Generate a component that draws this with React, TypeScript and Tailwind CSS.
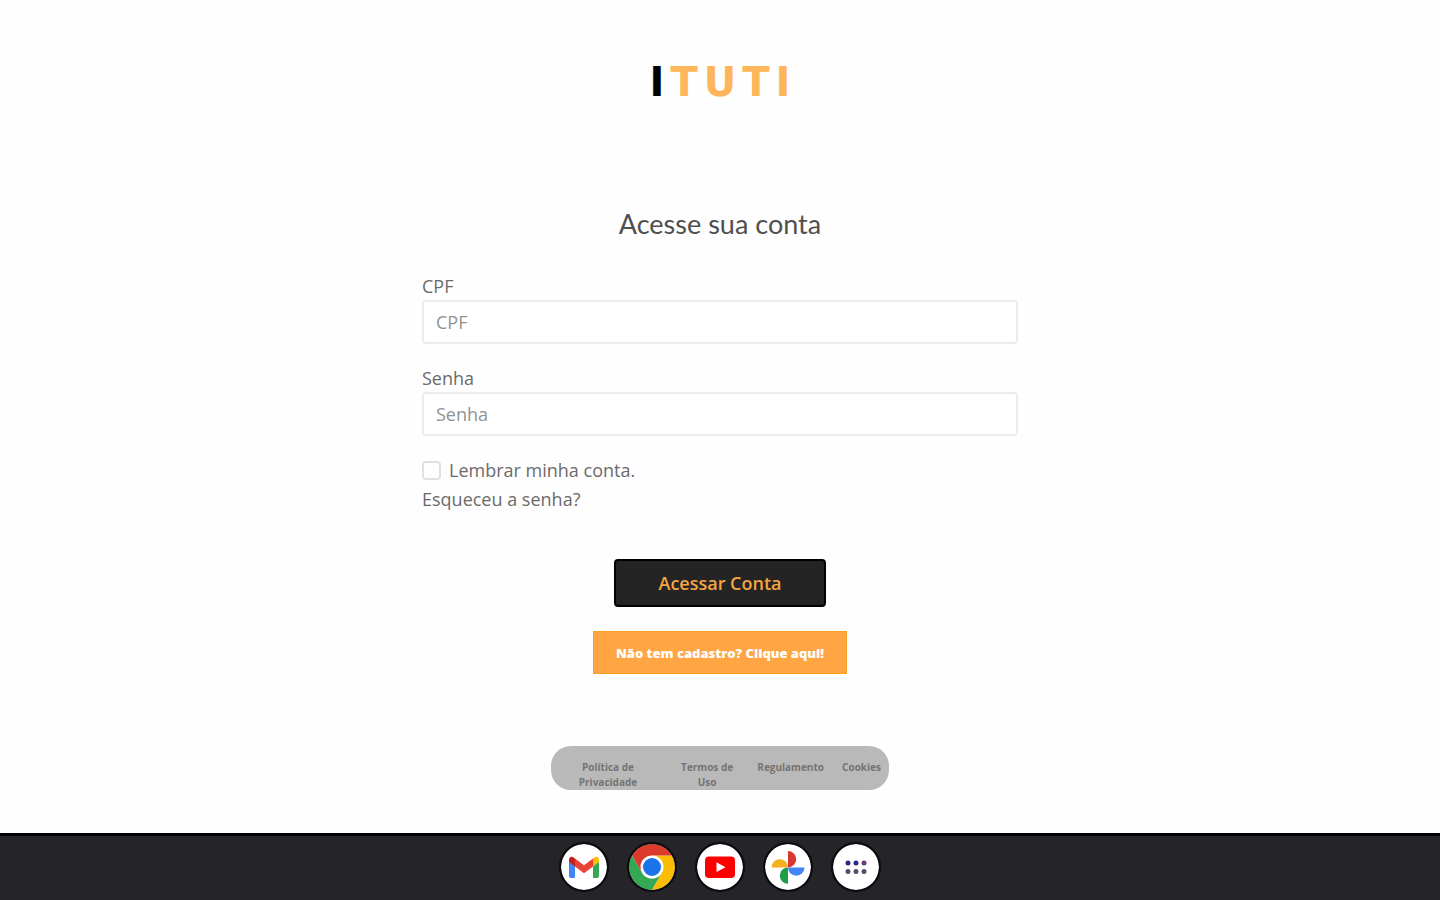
import { useState } from "react";

const footerLinks = [
  { label: "Política de Privacidade", className: "w-[98px]" },
  { label: "Termos de Uso", className: "w-16" },
  { label: "Regulamento", className: "" },
  { label: "Cookies", className: "" },
];

function GmailIcon() {
  return (
    <svg viewBox="0 0 46 46" className="size-full" aria-hidden="true">
      <path fill="#4285f4" d="M8 17l6 4.500V34h-4a2 2 0 0 1-2-2z" />
      <path fill="#34a853" d="M32 21.500l6-4.500v15a2 2 0 0 1-2 2h-4z" />
      <path fill="#fbbc04" d="M32 14.500l1.400-1.100c1.900-1.400 4.600 0 4.600 2.400V18l-6 4.500z" />
      <path fill="#ea4335" d="M14 22.500v-8l9 6.700 9-6.700v8l-9 6.700z" />
      <path fill="#c5221f" d="M8 15.800V18l6 4.500v-8l-1.400-1.100C10.700 12 8 13.400 8 15.800z" />
    </svg>
  );
}

function ChromeIcon() {
  return (
    <svg viewBox="0 0 46 46" className="size-full" aria-hidden="true">
      <path fill="#34a853" d="M3.080 11.500A23 23 0 0 0 23 46L33 28.700 23 23l-10 5.700z" />
      <path fill="#fbbc04" d="M42.920 11.500A23 23 0 0 1 23 46l10-17.300L23 11.500z" />
      <path fill="#db3a2c" d="M3.080 11.500a23 23 0 0 1 39.840 0H23L13 28.700z" />
      <circle cx="23" cy="23" r="11.500" fill="#fff" />
      <circle cx="23" cy="23" r="9" fill="#1a73e8" />
    </svg>
  );
}

function YoutubeIcon() {
  return (
    <svg viewBox="0 0 46 46" className="size-full" aria-hidden="true">
      <rect x="8" y="12.500" width="30" height="21.500" rx="4" fill="#f00" />
      <path fill="#fff" d="M19.500 18.300v9.800l9-4.900z" />
    </svg>
  );
}

function PhotosIcon() {
  return (
    <svg viewBox="0 0 46 46" className="size-full" aria-hidden="true">
      <path fill="#d93831" d="M23 7a8.200 8.200 0 0 1 0 16.400z" />
      <path fill="#4285f4" d="M39.500 23.400a8.200 8.200 0 0 1-16.500 0z" />
      <path fill="#1f9d49" d="M23 39.800a8.200 8.200 0 0 1 0-16.400z" />
      <path fill="#f4b020" d="M6.500 23.400a8.200 8.200 0 0 1 16.500 0z" />
    </svg>
  );
}

function AppsIcon() {
  return (
    <svg viewBox="0 0 46 46" className="size-full" aria-hidden="true">
      <g fill="#28288a">
        <circle cx="15" cy="19" r="2.500" />
        <circle cx="23" cy="19" r="2.500" />
      </g>
      <circle cx="31" cy="19" r="2.500" fill="#65406f" />
      <g fill="#50506e">
        <circle cx="15" cy="27.500" r="2.500" />
        <circle cx="23" cy="27.500" r="2.500" />
        <circle cx="31" cy="27.500" r="2.500" />
      </g>
    </svg>
  );
}

const shelfApps = [
  { name: "Gmail", icon: <GmailIcon /> },
  { name: "Chrome", icon: <ChromeIcon /> },
  { name: "YouTube", icon: <YoutubeIcon /> },
  { name: "Fotos", icon: <PhotosIcon /> },
  { name: "Aplicativos", icon: <AppsIcon /> },
];

export default function App() {
  const [remember, setRemember] = useState(false);

  return (
    <div className="flex min-h-screen flex-col bg-[#fefefe] font-['Open_Sans',sans-serif] text-[#6b6b6b]">
      <main className="flex grow flex-col items-center px-4 pt-14">
        <div className="flex gap-1.5 font-['DejaVu_Sans',sans-serif] text-[40px] leading-[52px] font-bold text-[#ffb55a]">
          <span className="text-black">I</span>
          <span>T</span>
          <span>U</span>
          <span>T</span>
          <span>I</span>
        </div>

        <h1 className="mt-[100px] font-[Lato,sans-serif] text-[27px] leading-8 text-[#505050]">
          Acesse sua conta
        </h1>

        <form
          className="mt-8 flex w-full max-w-[596px] flex-col text-[18px] leading-7"
          onSubmit={(e) => e.preventDefault()}
        >
          <label htmlFor="cpf">CPF</label>
          <input
            id="cpf"
            type="text"
            placeholder="CPF"
            className="h-11 w-full rounded border-2 border-[#ebecec] bg-white px-3 placeholder:text-[#8e9494]"
          />

          <label htmlFor="senha" className="mt-5">
            Senha
          </label>
          <input
            id="senha"
            type="password"
            placeholder="Senha"
            className="h-11 w-full rounded border-2 border-[#ebecec] bg-white px-3 placeholder:text-[#8e9494]"
          />

          <div className="mt-5 flex items-center gap-2">
            <input
              id="lembrar"
              type="checkbox"
              checked={remember}
              onChange={(e) => setRemember(e.target.checked)}
              className="size-[19px] appearance-none rounded border-2 border-[#e0e0e0] bg-white checked:bg-[#ffa73f]"
            />
            <label htmlFor="lembrar">Lembrar minha conta.</label>
          </div>
          <a href="#" className="mt-px self-start">
            Esqueceu a senha?
          </a>

          <button
            type="submit"
            className="mt-[46px] h-12 w-[212px] self-center rounded border-2 border-black bg-[#242424] font-semibold text-[#f5a443]"
          >
            Acessar Conta
          </button>
          <button
            type="button"
            className="mt-6 h-[43px] w-[254px] self-center border border-[#fb9f20] bg-[#ffa544] text-[13px] font-extrabold text-white"
          >
            Não tem cadastro? Clique aqui!
          </button>
        </form>

        <footer className="mt-[72px] mb-10 flex h-11 w-[338px] justify-between overflow-hidden rounded-[20px] bg-[#b9b9b9] px-2 pt-[14px] text-center text-[10px] leading-[15px] font-bold text-[#747474]">
          {footerLinks.map((link) => (
            <a key={link.label} href="#" className={link.className}>
              {link.label}
            </a>
          ))}
        </footer>
      </main>

      <nav className="flex h-[67px] items-center justify-center gap-[22px] border-t-[3px] border-black bg-[#242429] pb-0.5">
        {shelfApps.map((app) => (
          <button
            key={app.name}
            type="button"
            aria-label={app.name}
            className="size-[46px] overflow-hidden rounded-full bg-white outline-2 outline-[#0c0c0f]"
          >
            {app.icon}
          </button>
        ))}
      </nav>
    </div>
  );
}
